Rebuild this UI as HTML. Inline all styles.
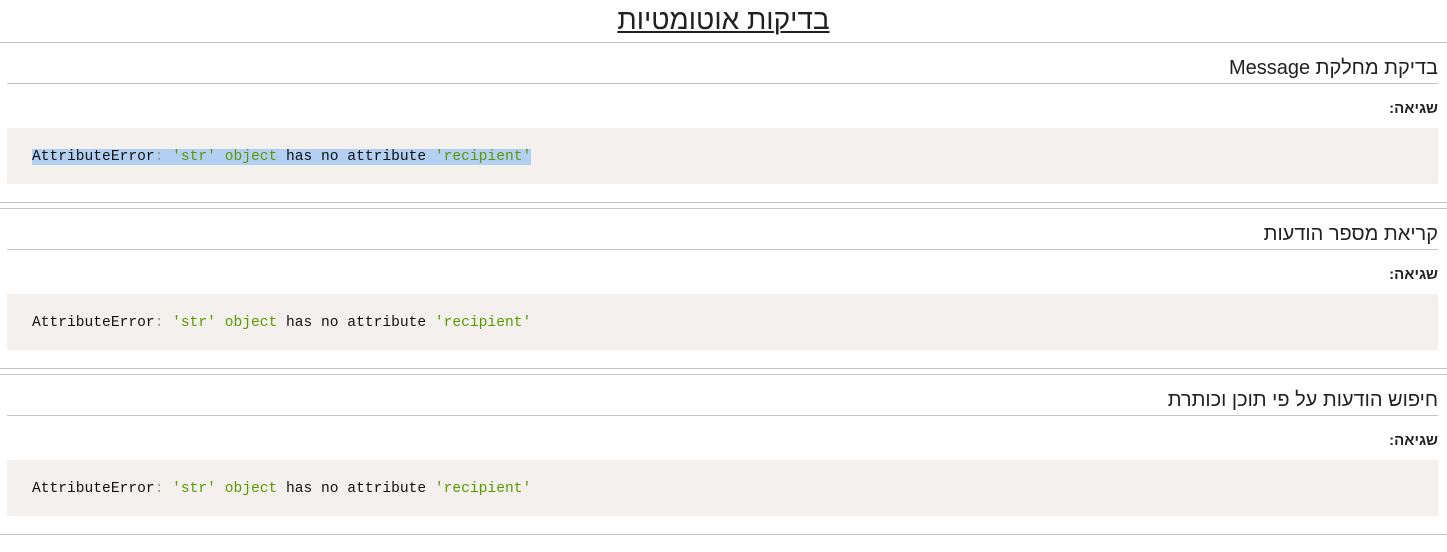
<!DOCTYPE html>
<html><head><meta charset="utf-8"><style>
body{margin:0;width:1447px;height:552px;background:#fff;position:relative;overflow:hidden;font-family:"Liberation Sans","DejaVu Sans",sans-serif;color:#212121;direction:rtl}
.a{position:absolute;white-space:nowrap}
.t{left:0;width:1447px;text-align:center;top:4px;font-size:28px;text-decoration:underline;text-underline-offset:2px;text-decoration-thickness:2px}
.hl{position:absolute;left:0;width:1447px;height:1px;background:#c4c4c4}
.sl{position:absolute;left:7px;width:1431px;height:1px;background:#c4c4c4}
.h{right:9px;font-size:20px}
.l{right:9px;font-size:15px;font-weight:bold}
.box{position:absolute;left:7px;width:1431px;height:56px;background:#f4f0ed}
.code{position:absolute;left:25px;top:19px;direction:ltr;font-family:"Liberation Mono","DejaVu Sans Mono",monospace;font-size:14.6px;line-height:20px;color:#111}
.g{color:#5a9a00}.p{color:#999}
.sel{background:#b3d0f3}
</style></head><body>
<div class="a t">בדיקות אוטומטיות</div>
<div class="hl" style="top:42px"></div>

<div class="a h" style="top:57px">בדיקת מחלקת Message</div>
<div class="sl" style="top:83px"></div>
<div class="a l" style="top:100px">שגיאה:</div>
<div class="box" style="top:128px"><div class="code"><span class="sel">AttributeError<span class="p">:</span> <span class="g">'str'</span> <span class="g">object</span> has no attribute <span class="g">'recipient'</span></span></div></div>
<div class="hl" style="top:202px"></div>
<div class="hl" style="top:208px"></div>

<div class="a h" style="top:223px">קריאת מספר הודעות</div>
<div class="sl" style="top:249px"></div>
<div class="a l" style="top:266px">שגיאה:</div>
<div class="box" style="top:294px"><div class="code">AttributeError<span class="p">:</span> <span class="g">'str'</span> <span class="g">object</span> has no attribute <span class="g">'recipient'</span></div></div>
<div class="hl" style="top:368px"></div>
<div class="hl" style="top:374px"></div>

<div class="a h" style="top:389px">חיפוש הודעות על פי תוכן וכותרת</div>
<div class="sl" style="top:415px"></div>
<div class="a l" style="top:432px">שגיאה:</div>
<div class="box" style="top:460px"><div class="code">AttributeError<span class="p">:</span> <span class="g">'str'</span> <span class="g">object</span> has no attribute <span class="g">'recipient'</span></div></div>
<div class="hl" style="top:534px"></div>
</body></html>
